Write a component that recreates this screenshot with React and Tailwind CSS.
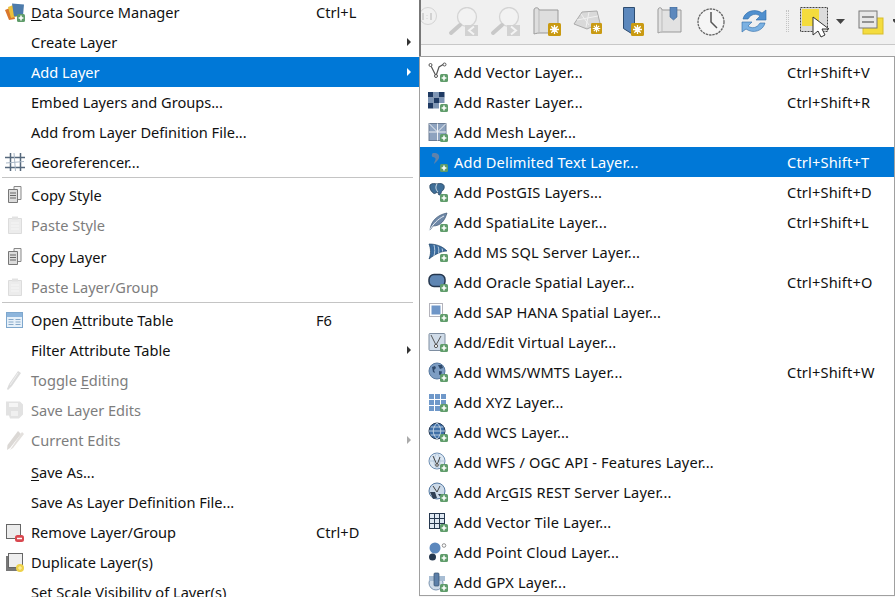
import React from 'react';

// green "add" badge that sits on the corner of the layer icons
const Plus = ({ x = 12, y = 12 }) => (
  <g transform={`translate(${x} ${y})`}>
    <rect width="8" height="8" rx="1.5" fill="#5f9c6a" />
    <path d="M4 1.6v4.8M1.6 4h4.8" stroke="#fff" strokeWidth="1.5" />
  </g>
);

const Svg = ({ children, w = 20, h = 20 }) => (
  <svg width={w} height={h} viewBox={`0 0 ${w} ${h}`} className="shrink-0">
    {children}
  </svg>
);

const Doc = ({ off }) => (
  <Svg>
    {off ? (
      <>
        <path d="M3.500 3.500h13v15h-13z" fill="#ececec" stroke="#dcdcdc" />
        <path d="M7 1.500h6v3H7z" fill="#e2e2e2" />
        <path d="M6 8h8M6 11h8M6 14h8" stroke="#f6f6f6" />
      </>
    ) : (
      <>
        <path d="M9 1.500h7v13H9z" fill="#f2f2f2" stroke="#888" />
        <path d="M3.500 4.500h9v13h-9z" fill="#dcdcdc" stroke="#777" />
        <path d="M5 8h6M5 10.500h6M5 13h6" stroke="#666" />
      </>
    )}
  </Svg>
);

const icons = {
  source: (
    <Svg>
      <path d="M0 8l7-3 3 12-6 1z" fill="#d9772c" />
      <path d="M3 5l8-3 3 12-8 2z" fill="#edc13c" />
      <path d="M7 1.500l12 1-1 11-9 1z" fill="#4d7bab" />
      <Plus />
    </Svg>
  ),
  georef: (
    <Svg>
      <path d="M5.500 1v18M15.500 1v18" stroke="#56687c" strokeWidth="1.500" />
      <path d="M0 5.500h20M0 15.500h20" stroke="#56687c" strokeWidth="1.500" />
      <path d="M1 11l18-1.500M9 1l1.500 18" stroke="#a9b7c6" />
    </Svg>
  ),
  copy: <Doc />,
  paste: <Doc off />,
  table: (
    <Svg>
      <rect x="1.500" y="2.500" width="16" height="15" fill="#e6f0f9" stroke="#7ea7cd" />
      <rect x="2" y="3" width="15" height="4" fill="#8db5dc" />
      <path d="M3.500 9.500h5M10.500 9.500h5M3.500 12h5M10.500 12h5M3.500 14.500h5M10.500 14.500h5" stroke="#86a8c8" />
    </Svg>
  ),
  pencil: (
    <Svg>
      <path d="M13 1l3 2L7 16l-4 4-1-1 2-5z" fill="#dcdcdc" />
      <path d="M13 3L5 15" stroke="#f0f0f0" />
    </Svg>
  ),
  save: (
    <Svg>
      <path d="M1 1.500h14l3 3v10l-4 4H5l-1-3H1z" fill="#e2e2e2" />
      <rect x="4" y="3" width="9" height="4" fill="#f5f5f5" />
      <rect x="6" y="11" width="7" height="5" fill="#f0f0f0" />
    </Svg>
  ),
  pencils: (
    <Svg>
      <path d="M13 1l3 3L5 18l-3 2 .500-5z" fill="#dbd8d5" />
      <path d="M17 2l2 2-11 14-3 2z" fill="#e3e0dd" />
    </Svg>
  ),
  remove: (
    <Svg>
      <rect x="1.500" y="2.500" width="14" height="14" fill="#ececec" stroke="#666" />
      <rect x="10" y="13" width="9" height="7" rx="2.500" fill="#d9484f" />
      <path d="M12 16.500h5" stroke="#fff" strokeWidth="1.500" />
    </Svg>
  ),
  duplicate: (
    <Svg>
      <rect x="1" y="4" width="14" height="15" fill="#777" />
      <rect x="3.500" y="1.500" width="14" height="14" fill="#eee" stroke="#666" />
      <circle cx="15" cy="16" r="4" fill="#eed24a" />
      <path d="M13 16h4M15 14v4" stroke="#fff4b0" />
    </Svg>
  ),
  vector: (
    <Svg>
      <path d="M2.500 3l5.500 11 3-9 5-3" fill="none" stroke="#555" strokeWidth="1.200" />
      <circle cx="2.500" cy="3" r="1.500" fill="#fff" stroke="#555" />
      <circle cx="8" cy="14" r="1.500" fill="#fff" stroke="#555" />
      <circle cx="16.500" cy="2.500" r="1.500" fill="#fff" stroke="#555" />
      <Plus />
    </Svg>
  ),
  raster: (
    <Svg>
      <path d="M0 0h5.500v5.500H0zM11 0h5.500v5.500H11zM5.500 5.500H11V11H5.500zM0 11h5.500v5.500H0z" fill="#1f3a63" />
      <path d="M5.500 0H11v5.500H5.500zM0 5.500h5.500V11H0zM11 5.500h5.500V11H11zM5.500 11H11v5.500H5.500z" fill="#7f96b5" />
      <Plus />
    </Svg>
  ),
  mesh: (
    <Svg>
      <rect x="1" y="1.500" width="17" height="17" fill="#8ea3bf" stroke="#6c7d94" />
      <path d="M1 10h17M9.500 1.500v17M1 1.500l8.500 8.500L18 1.500" stroke="#eef1f5" fill="none" />
      <Plus />
    </Svg>
  ),
  delimited: (
    <Svg>
      <path d="M5 1c4-.500 7 1.500 6 5-.5 2-3 4-5 6 0-2 2-4 1.500-5.500C7 5 5 5.500 4 4.500 3.500 3 4 1.500 5 1z" fill="#5e82ab" />
      <Plus />
    </Svg>
  ),
  postgis: (
    <Svg>
      <path d="M2 3c2-2 5-1.500 7-1 3-1 6-.5 7 1.500 1 3-1 5-2.500 6-.5 2-1 4-2.500 3.500-1-.5-.5-2-1-3-2 .5-3 2-4 1.500C4 10.500 1 7 2 3z" fill="#3f6e97" stroke="#26435e" strokeWidth=".8" />
      <path d="M9 2c-2 3-1 6 1 8" stroke="#dbe6ef" fill="none" />
      <Plus />
    </Svg>
  ),
  spatialite: (
    <Svg>
      <path d="M2 18C3 9 9 3 19 1c-2 7-6 13-14 13z" fill="#6f88a7" stroke="#3f5775" strokeWidth=".7" />
      <path d="M1 19C5 12 10 7 16 4" stroke="#e8edf3" fill="none" />
      <Plus />
    </Svg>
  ),
  mssql: (
    <Svg>
      <path d="M1 2c7 0 13 2 18 7-5 0-12 3-18 8 2-5 2-10 0-15z" fill="#3c6c9e" stroke="#234668" strokeWidth=".7" />
      <path d="M6 3c1 4 1 7 0 11M10 4.500c1 2 1 5 .5 7M14 6.500c.5 1 .5 2 .5 3" stroke="#b9cde0" fill="none" />
      <Plus />
    </Svg>
  ),
  oracle: (
    <Svg>
      <rect x="1" y="2.500" width="16" height="12" rx="5" fill="#5f86b3" stroke="#24364d" strokeWidth="1.500" />
      <Plus />
    </Svg>
  ),
  hana: (
    <Svg>
      <rect x="1.500" y="1.500" width="13" height="13" fill="none" stroke="#667" strokeDasharray="1 1" />
      <rect x="3.500" y="3.500" width="9" height="9" fill="#6f96c7" />
      <Plus />
    </Svg>
  ),
  virtual: (
    <Svg>
      <rect x="1" y="1.500" width="16" height="17" rx="1" fill="#cfdbe8" stroke="#7e8ea1" />
      <path d="M3 3l5 10 5-9" fill="none" stroke="#555" />
      <circle cx="8" cy="14" r="1.600" fill="#fff" stroke="#555" />
      <Plus />
    </Svg>
  ),
  wms: (
    <Svg>
      <circle cx="9" cy="9" r="8" fill="#7d9dc3" stroke="#56789f" />
      <path d="M4 5l3-1 1 2-2 2 1 3-2-1zM10 3h4l1 3-3 1zM11 9l3 .5-1 4-2-1z" fill="#2f4a6c" />
      <Plus />
    </Svg>
  ),
  xyz: (
    <Svg>
      <path d="M1 2h5v5H1zM7 2h5v5H7zM13 2h5v5h-5zM1 8h5v5H1zM7 8h5v5H7zM13 8h5v4h-5zM1 14h5v5H1zM7 14h5v5H7z" fill="#6f98c9" />
      <Plus />
    </Svg>
  ),
  wcs: (
    <Svg>
      <circle cx="9" cy="9" r="8" fill="#3e6ea6" stroke="#2a3f5a" />
      <path d="M1 9h16M2.500 5h13M2.500 13h13M9 1c-5 5-5 11 0 16M9 1c5 5 5 11 0 16" stroke="#d6e2ee" fill="none" strokeWidth=".8" />
      <Plus />
    </Svg>
  ),
  wfs: (
    <Svg>
      <circle cx="9" cy="9" r="8" fill="#dbe6f1" stroke="#6e8fb3" />
      <path d="M1 9h16M9 1c-4 5-4 11 0 16M9 1c4 5 4 11 0 16" stroke="#a9c0d8" fill="none" strokeWidth=".8" />
      <path d="M5 4l4 9 3-8" fill="none" stroke="#444" />
      <circle cx="9" cy="13" r="1.300" fill="#fff" stroke="#444" />
      <Plus />
    </Svg>
  ),
  arcgis: (
    <Svg>
      <circle cx="9" cy="9" r="8" fill="#cbd9e8" stroke="#567ba3" />
      <path d="M5 4l4 6 3-6" fill="none" stroke="#444" />
      <path d="M2 10h5l2 6-4 1zM10 12h5l-2 4z" fill="#2f3f55" />
      <Plus />
    </Svg>
  ),
  tile: (
    <Svg>
      <rect x="1.500" y="1.500" width="15" height="15" fill="#dfe8f2" stroke="#26384f" />
      <path d="M6.500 1.500v15M11.500 1.500v15M1.500 6.500h15M1.500 11.500h15" stroke="#26384f" />
      <Plus />
    </Svg>
  ),
  cloud: (
    <Svg>
      <circle cx="7" cy="6" r="5.500" fill="#5c88bd" />
      <circle cx="4.500" cy="15" r="3.500" fill="#26384f" />
      <circle cx="16" cy="3.500" r="1.800" fill="#fff" stroke="#777" strokeWidth=".8" />
      <Plus />
    </Svg>
  ),
  gpx: (
    <Svg>
      <circle cx="8" cy="11" r="7" fill="#cfdce9" stroke="#7c95b0" />
      <path d="M1 4h16v5H1z" fill="#a8bdd3" />
      <rect x="6" y="1" width="5" height="13" rx="1" fill="#5c7fa8" stroke="#33506f" strokeWidth=".7" />
      <Plus />
    </Svg>
  ),
};

const Arrow = ({ color = '#333' }) => (
  <svg width="6" height="10" viewBox="0 0 6 10" className="absolute right-[7px] top-[10px]">
    <path d="M1 1l4 4-4 4z" fill={color} />
  </svg>
);

// label with an optional underlined mnemonic
const Label = ({ text, mark }) => {
  if (mark === undefined) return <span>{text}</span>;
  return (
    <span>
      {text.slice(0, mark)}
      <span className="underline underline-offset-2">{text[mark]}</span>
      {text.slice(mark + 1)}
    </span>
  );
};

const Row = ({ icon, text, mark, keys, keyClass, active, off, sub, textClass }) => (
  <div
    className={`relative flex h-[30px] items-center whitespace-nowrap ${
      active ? 'bg-[#0078d7] text-[#fff]' : off ? 'text-[#7d7d7d]' : 'text-[#111]'
    }`}
  >
    <div className={`flex w-[20px] justify-center ${textClass}`}>{icon && icons[icon]}</div>
    <div className="ml-[6px] flex-1">
      <Label text={text} mark={mark} />
    </div>
    {keys && <div className={`absolute top-[4px] ${keyClass}`}>{keys}</div>}
    {sub && <Arrow color={active ? '#fff' : off ? '#aaa' : '#333'} />}
  </div>
);

const leftTop = [
  { icon: 'source', text: 'Data Source Manager', mark: 0, keys: 'Ctrl+L' },
  { text: 'Create Layer', sub: true },
  { text: 'Add Layer', sub: true, active: true },
  { text: 'Embed Layers and Groups...' },
  { text: 'Add from Layer Definition File...' },
  { icon: 'georef', text: 'Georeferencer...' },
];

const leftBottom = [
  { icon: 'remove', text: 'Remove Layer/Group', keys: 'Ctrl+D' },
  { icon: 'duplicate', text: 'Duplicate Layer(s)' },
  { text: 'Set Scale Visibility of Layer(s)' },
];

const subItems = [
  { icon: 'vector', text: 'Add Vector Layer...', keys: 'Ctrl+Shift+V' },
  { icon: 'raster', text: 'Add Raster Layer...', keys: 'Ctrl+Shift+R' },
  { icon: 'mesh', text: 'Add Mesh Layer...' },
  { icon: 'delimited', text: 'Add Delimited Text Layer...', keys: 'Ctrl+Shift+T', active: true },
  { icon: 'postgis', text: 'Add PostGIS Layers...', keys: 'Ctrl+Shift+D' },
  { icon: 'spatialite', text: 'Add SpatiaLite Layer...', keys: 'Ctrl+Shift+L' },
  { icon: 'mssql', text: 'Add MS SQL Server Layer...' },
  { icon: 'oracle', text: 'Add Oracle Spatial Layer...', keys: 'Ctrl+Shift+O' },
  { icon: 'hana', text: 'Add SAP HANA Spatial Layer...' },
  { icon: 'virtual', text: 'Add/Edit Virtual Layer...' },
  { icon: 'wms', text: 'Add WMS/WMTS Layer...', keys: 'Ctrl+Shift+W' },
  { icon: 'xyz', text: 'Add XYZ Layer...' },
  { icon: 'wcs', text: 'Add WCS Layer...' },
  { icon: 'wfs', text: 'Add WFS / OGC API - Features Layer...' },
  { icon: 'arcgis', text: 'Add ArcGIS REST Server Layer...', mark: 6 },
  { icon: 'tile', text: 'Add Vector Tile Layer...' },
  { icon: 'cloud', text: 'Add Point Cloud Layer...' },
  { icon: 'gpx', text: 'Add GPX Layer...' },
];

const LeftRow = (item) => <Row {...item} keyClass="left-[316px]" textClass="ml-[5px]" />;

const Gear = ({ x, y, s = 13 }) => (
  <g transform={`translate(${x} ${y}) scale(${s / 13})`}>
    <rect width="13" height="13" rx="1.500" fill="#c99a12" />
    <path d="M6.500 2v9M2 6.500h9M3.300 3.300l6.400 6.400M9.700 3.300l-6.400 6.400" stroke="#fff" strokeWidth="1.300" />
    <circle cx="6.500" cy="6.500" r="2.200" fill="#fff" />
  </g>
);

const Magnifier = ({ flip, className }) => (
  <svg width="30" height="30" viewBox="0 0 30 30" className={`shrink-0 ${className}`}>
    <circle cx="19" cy="10" r="9.500" fill="#f2f2f2" stroke="#d4d4d4" strokeWidth="1.300" />
    <path d="M3 26l9-8" stroke="#c8c8c8" strokeWidth="4" strokeLinecap="round" />
    <rect x="17" y="18" width="13" height="11" fill="#d2d2d2" />
    <path d={flip ? 'M21 19.500l5 4-5 4' : 'M26 19.500l-5 4 5 4'} fill="none" stroke="#f4f4f4" strokeWidth="2" />
  </svg>
);

const Toolbar = () => (
  <div className="flex h-[45px] items-start border-b border-[#c8c8c8] bg-[#f0f0f0] pt-[7px]">
    {/* 1:1 zoom, cut off by the menu */}
    <svg width="17" height="18" viewBox="0 0 17 18" className="shrink-0">
      <circle cx="7" cy="9" r="8.500" fill="none" stroke="#d4d4d4" />
      <path d="M2 6v7M6 8v.5M6 11v.5M10 6v7" stroke="#c8c8c8" strokeWidth="1.500" />
    </svg>
    <Magnifier className="ml-[10px]" />
    <Magnifier flip className="ml-[12px]" />
    <svg width="30" height="30" viewBox="0 0 30 30" className="ml-[13px] shrink-0">
      <path d="M1 3c0-3 5-3 5 0h19v23H6c-2 0-5 1-5 1z" fill="#dedede" stroke="#999" />
      <path d="M6 3v22" stroke="#bbb" />
      <Gear x="15" y="16" />
    </svg>
    <svg width="30" height="29" viewBox="0 0 30 29" className="ml-[10px] shrink-0">
      <path d="M1 17L9 5l15-1 3 12-13 6z" fill="#d9d9d9" stroke="#aaa" />
      <path d="M8 7l8 11M16 5l-3 15M4 13l21-4" stroke="#f1f1f1" />
      <Gear x="18" y="16" s={11} />
    </svg>
    <svg width="26" height="30" viewBox="0 0 26 30" className="ml-[19px] shrink-0">
      <path d="M1.500 .5h11v20l-3 6-8-5z" fill="#5c88bd" stroke="#2d4c70" />
      <Gear x="9" y="16" />
    </svg>
    <svg width="27" height="27" viewBox="0 0 27 27" className="ml-[9px] shrink-0">
      <path d="M1 3c0-3 4-3 4 0h19v22H5c-2 0-4 1-4 1z" fill="#e2e2e2" stroke="#999" />
      <path d="M5 3v21" stroke="#bbb" />
      <path d="M13 0h7v10l-3.500 3L13 10z" fill="#5c88bd" stroke="#3c638f" strokeWidth=".6" />
    </svg>
    <svg width="28" height="28" viewBox="0 0 28 28" className="ml-[13px] mt-[1px] shrink-0">
      <circle cx="14" cy="14" r="13" fill="#f5f5f5" stroke="#666" strokeWidth="1.300" strokeDasharray="2.500 .8" />
      <path d="M14 4v10l6 6" fill="none" stroke="#555" strokeWidth="1.500" />
    </svg>
    <svg width="28" height="28" viewBox="0 0 28 28" className="ml-[15px] shrink-0">
      <path d="M3 12C5 4 15 1 22 6l4-3v10H16l4-4c-4-3-9-2-12 3z" fill="#4f8fce" stroke="#2c6aa6" strokeWidth=".6" />
      <path d="M25 16c-2 8-12 11-19 6l-4 3V15h10l-4 4c4 3 9 2 12-3z" fill="#7bb1e2" stroke="#2c6aa6" strokeWidth=".6" />
    </svg>
    <div className="ml-[18px] mt-[3px] h-[22px] w-[3px] shrink-0 border-x border-dotted border-[#c4c4c4]" />
    <svg width="31" height="32" viewBox="0 0 31 32" className="ml-[11px] shrink-0">
      <rect x=".5" y=".5" width="27" height="24" fill="#dcdcdc" stroke="#444" strokeDasharray="2 1" />
      <rect x="2" y="2" width="17" height="17" fill="#f4dc3e" />
      <path d="M13 10v18l5-4 3 6 4-2-3-6h7z" fill="#fff" stroke="#333" />
    </svg>
    <svg width="10" height="6" viewBox="0 0 10 6" className="ml-[5px] mt-[12px] shrink-0">
      <path d="M0 0h9L4.500 5z" fill="#444" />
    </svg>
    <svg width="26" height="26" viewBox="0 0 26 26" className="ml-[12px] mt-[3px] shrink-0">
      <rect x="5" y="8" width="20" height="16" fill="#f4dc3e" stroke="#d8bd2a" />
      <rect x="1" y="1" width="18" height="17" fill="#e8e8e8" stroke="#777" />
      <path d="M4 7h12M4 12h12" stroke="#777" strokeWidth="1.500" />
    </svg>
    <svg width="4" height="4" viewBox="0 0 4 4" className="ml-[9px] mt-[12px] shrink-0">
      <path d="M0 0h4v2L2 4 0 2z" fill="#444" />
    </svg>
  </div>
);

export default function App() {
  return (
    <div
      className="flex h-[597px] w-[895px] overflow-hidden bg-white text-[14.6px] leading-[22px]"
      style={{ fontFamily: '"Noto Sans", "Open Sans", sans-serif' }}
    >
      {/* main context menu */}
      <div className="mt-[-3px] w-[419px] shrink-0 bg-white">
        {leftTop.map((item) => (
          <LeftRow key={item.text} {...item} />
        ))}
        <div className="h-[3px]">
          <div className="ml-[2px] mr-[6px] h-px bg-[#c4c4c4]" />
        </div>
        <LeftRow icon="copy" text="Copy Style" />
        <LeftRow icon="paste" text="Paste Style" off />
        <div className="h-[2px]" />
        <LeftRow icon="copy" text="Copy Layer" />
        <LeftRow icon="paste" text="Paste Layer/Group" off />
        <div className="h-[3px]">
          <div className="ml-[2px] mr-[6px] h-px bg-[#c4c4c4]" />
        </div>
        <LeftRow icon="table" text="Open Attribute Table" mark={5} keys="F6" />
        <LeftRow text="Filter Attribute Table" sub />
        <LeftRow icon="pencil" text="Toggle Editing" mark={7} off />
        <LeftRow icon="save" text="Save Layer Edits" off />
        <LeftRow icon="pencils" text="Current Edits" off sub />
        <div className="h-[2px]" />
        <LeftRow text="Save As..." mark={0} />
        <LeftRow text="Save As Layer Definition File..." />
        {leftBottom.map((item) => (
          <LeftRow key={item.text} {...item} />
        ))}
      </div>

      {/* toolbar behind the submenu, then the submenu itself */}
      <div className="flex min-w-0 flex-1 flex-col bg-[#f7f7f7]">
        <div className="h-[56px] border-l-2 border-[#777]">
          <Toolbar />
        </div>
        <div className="h-[540px] w-full border border-[#a0a0a0] bg-white tracking-[0.17px]">
          {subItems.map((item) => (
            <Row key={item.text} {...item} keyClass="left-[367px]" textClass="ml-[8px]" />
          ))}
        </div>
      </div>
    </div>
  );
}
